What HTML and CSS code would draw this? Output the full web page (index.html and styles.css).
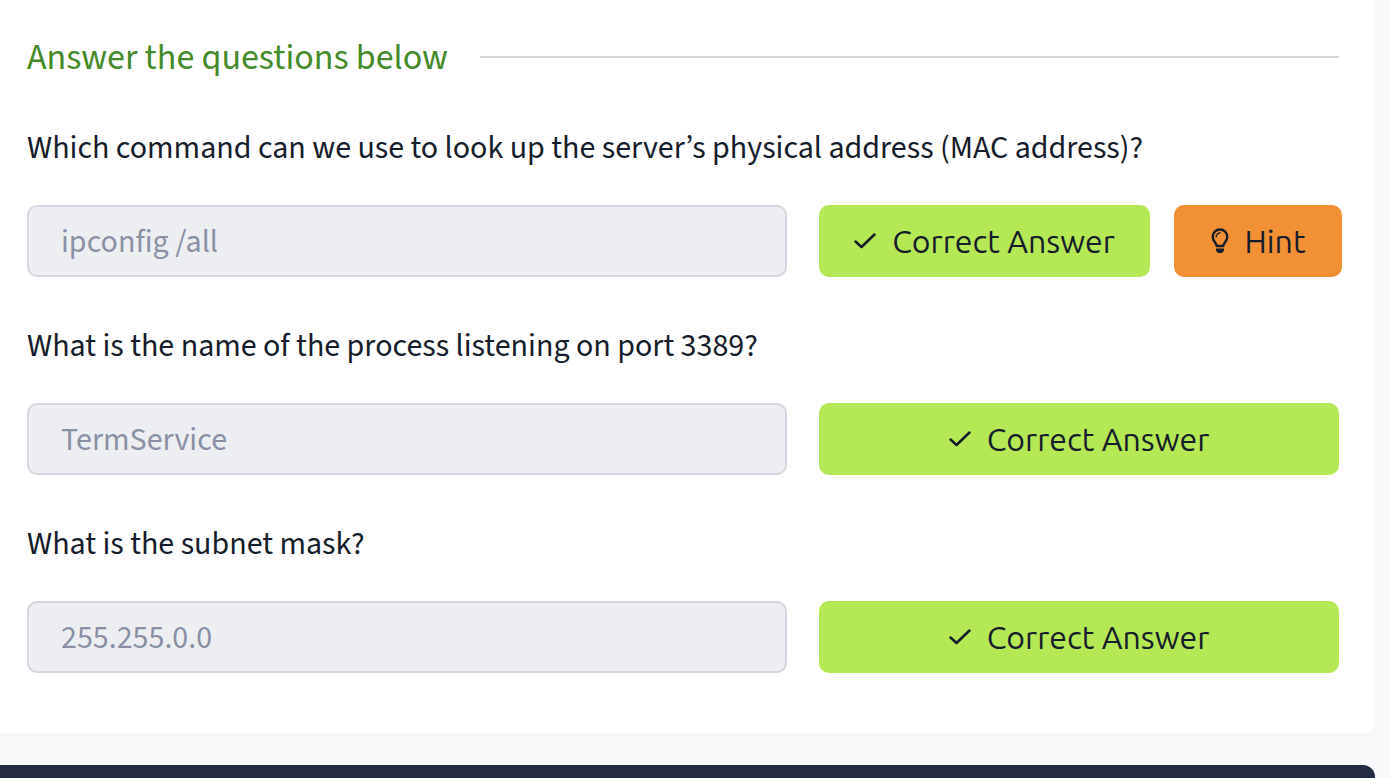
FILE: index.html
```
<!DOCTYPE html>
<html lang="en">
<head>
<meta charset="utf-8">
<meta name="viewport" content="width=device-width, initial-scale=1">
<title>Answer the questions below</title>
<link rel="stylesheet" href="styles.css">
</head>
<body>
<svg class="sprite" aria-hidden="true">
  <symbol id="check" viewBox="0 0 22 16"><path d="M1.5 8.5 L7.5 14 L20.5 1.5" fill="none" stroke="currentColor" stroke-width="2.5" stroke-linecap="round" stroke-linejoin="round"/></symbol>
  <symbol id="bulb" viewBox="0 0 18 26">
    <path d="M5.8 18 C5.3 14.5 1.7 13.2 1.7 8.8 A7.3 7.3 0 0 1 16.3 8.8 C16.3 13.2 12.7 14.5 12.2 18 Z" fill="none" stroke="currentColor" stroke-width="2.4" stroke-linejoin="round"/>
    <path d="M5.2 8.8 A3.8 3.8 0 0 1 9 5.1" fill="none" stroke="currentColor" stroke-width="1.5" stroke-linecap="round"/>
    <path d="M5 20.5 H13 V22.3 Q13 23 12.3 23.6 L11.5 24.5 Q11 25 10.2 25 H7.8 Q7 25 6.5 24.5 L5.7 23.6 Q5 23 5 22.3 Z" fill="currentColor"/>
  </symbol>
</svg>
<main class="card">
  <header class="heading">
    <h2 class="heading-title">Answer the questions below</h2>
    <hr class="heading-rule">
  </header>
  <form class="question">
    <label class="question-text" for="q1">Which command can we use to look up the server’s physical address (MAC address)?</label>
    <div class="answer-row">
      <input class="answer" id="q1" type="text" value="ipconfig /all" readonly>
      <div class="actions">
        <button class="btn btn-correct" type="button"><svg class="icon-check" aria-hidden="true"><use href="#check"/></svg>Correct Answer</button>
        <button class="btn btn-hint" type="button"><svg class="icon-bulb" aria-hidden="true"><use href="#bulb"/></svg>Hint</button>
      </div>
    </div>
  </form>
  <form class="question">
    <label class="question-text" for="q2">What is the name of the process listening on port 3389?</label>
    <div class="answer-row">
      <input class="answer" id="q2" type="text" value="TermService" readonly>
      <div class="actions">
        <button class="btn btn-correct" type="button"><svg class="icon-check" aria-hidden="true"><use href="#check"/></svg>Correct Answer</button>
      </div>
    </div>
  </form>
  <form class="question">
    <label class="question-text" for="q3">What is the subnet mask?</label>
    <div class="answer-row">
      <input class="answer" id="q3" type="text" value="255.255.0.0" readonly>
      <div class="actions">
        <button class="btn btn-correct" type="button"><svg class="icon-check" aria-hidden="true"><use href="#check"/></svg>Correct Answer</button>
      </div>
    </div>
  </form>
</main>
<section class="next-task"></section>
</body>
</html>
```
FILE: styles.css
```
* { box-sizing: border-box; }

body {
  margin: 0;
  min-height: 100vh;
  display: flex;
  flex-direction: column;
  gap: 32px;
  padding-right: 15px;
  background: #f8f8fb;
  color: #151c2b;
  font-family: "Source Sans Pro", "Source Sans 3", "Noto Sans", sans-serif;
  font-size: 32px;
  line-height: 48px;
}

.sprite { position: absolute; width: 0; height: 0; }

.card {
  padding: 32px 36px 60px 27px;
  background: #fff;
  border-radius: 0 0 10px 0;
}

.heading {
  display: flex;
  align-items: center;
  gap: 32px;
  margin-bottom: 42px;
}

.heading-title {
  margin: 0;
  padding-top: 2px;
  color: #448a28;
  font-size: 36px;
  font-weight: 400;
}

.heading-rule {
  flex: 1;
  height: 2px;
  margin: 0;
  border: 0;
  background: #d5d7df;
}

.question + .question { margin-top: 45px; }

.question-text { display: block; margin-bottom: 33px; }

.answer-row {
  display: grid;
  grid-template-columns: minmax(0, 19fr) minmax(0, 13fr);
  gap: 32px;
}

.answer {
  width: 100%;
  height: 72px;
  padding: 2px 32px 0;
  border: 2px solid #d4d6de;
  border-radius: 10px;
  background: #edeef2;
  color: #8a90a4;
  font: inherit;
}

.actions { display: flex; gap: 24px; }

.btn {
  display: flex;
  flex: 1 0 auto;
  align-items: center;
  justify-content: center;
  gap: 16px;
  height: 72px;
  padding: 0 34px;
  border: 0;
  border-radius: 10px;
  color: #151c2b;
  font-family: Ubuntu, "Noto Sans", sans-serif;
  font-size: 32px;
  font-weight: 400;
  line-height: 48px;
  white-space: nowrap;
}

.btn-correct { min-width: 331px; background: #b4e854; }

.btn-hint { flex-grow: 0; min-width: 168px; background: #f29035; }

.icon-check { width: 22px; height: 16px; }

.icon-bulb { width: 18px; height: 26px; }

.next-task {
  flex: 1;
  background: #232c42;
  border-radius: 0 12px 0 0;
}
```
